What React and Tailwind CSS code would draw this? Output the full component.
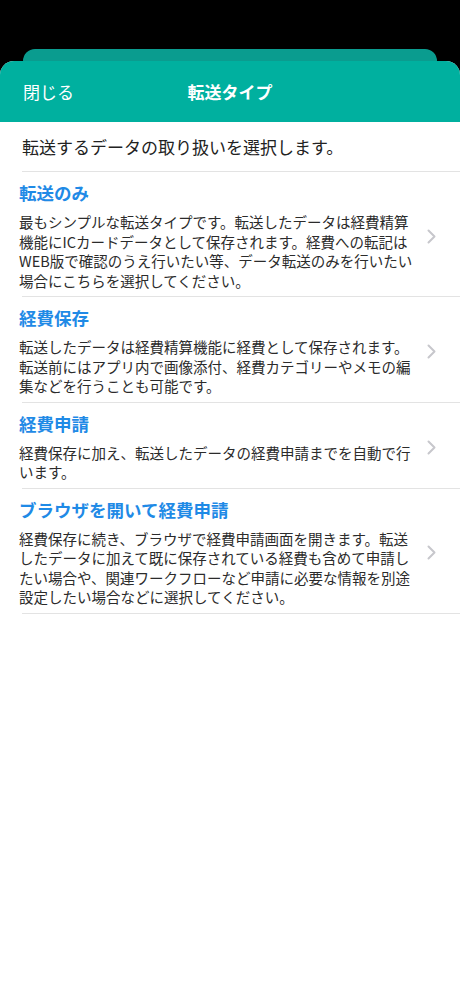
const items = [
  {
    title: '転送のみ',
    lines: [
      '最もシンプルな転送タイプです。転送したデータは経費精算',
      '機能にICカードデータとして保存されます。経費への転記は',
      'WEB版で確認のうえ行いたい等、データ転送のみを行いたい',
      '場合にこちらを選択してください。',
    ],
  },
  {
    title: '経費保存',
    lines: [
      '転送したデータは経費精算機能に経費として保存されます。',
      '転送前にはアプリ内で画像添付、経費カテゴリーやメモの編',
      '集などを行うことも可能です。',
    ],
  },
  {
    title: '経費申請',
    lines: [
      '経費保存に加え、転送したデータの経費申請までを自動で行',
      'います。',
    ],
  },
  {
    title: 'ブラウザを開いて経費申請',
    lines: [
      '経費保存に続き、ブラウザで経費申請画面を開きます。転送',
      'したデータに加えて既に保存されている経費も含めて申請し',
      'たい場合や、関連ワークフローなど申請に必要な情報を別途',
      '設定したい場合などに選択してください。',
    ],
  },
];

function Chevron() {
  return (
    <svg width="9" height="15" viewBox="0 0 9 15" fill="none">
      <path d="M1.5 1.5 L7.5 7.5 L1.5 13.5" stroke="#c7c7cc" strokeWidth="2" strokeLinecap="round" strokeLinejoin="round" />
    </svg>
  );
}

function TypeRow({ title, lines }) {
  return (
    <div className="border-b border-[#e3e3e3] ml-[22px]">
      <div className="flex items-center -ml-[3px] pt-[10px] pb-[6px] pr-[24px]">
        <div className="flex-1">
          <div className="text-[17.5px] leading-[22px] font-bold text-[#1f8ae6]">{title}</div>
          <div className="mt-[8px] text-[14.5px] leading-[19.5px] text-[#2b2b2b]">
            {lines.map((line) => (
              <div key={line} className="whitespace-nowrap">{line}</div>
            ))}
          </div>
        </div>
        <Chevron />
      </div>
    </div>
  );
}

export default function App() {
  return (
    <div
      className="min-h-[996px] bg-black flex flex-col"
      style={{ fontFamily: '"Noto Sans CJK JP", "Noto Sans", sans-serif' }}
    >
      <div className="h-[49px]" />
      {/* stacked sheet behind */}
      <div className="mx-[23px] h-[12px] rounded-t-[12px] bg-[#0a9c8f]" />
      <div className="flex-1 flex flex-col bg-white rounded-t-[14px] overflow-hidden">
        {/* Header */}
        <div className="h-[61px] bg-[#00b09f] flex items-center relative px-[23px]">
          <span className="text-[17px] text-white">閉じる</span>
          <span className="absolute left-0 right-0 text-center text-[17px] font-bold text-white pointer-events-none">
            転送タイプ
          </span>
        </div>

        {/* Intro */}
        <div className="border-b border-[#e3e3e3] ml-[22px] h-[50px] flex items-center">
          <span className="text-[17px] text-[#222]">転送するデータの取り扱いを選択します。</span>
        </div>

        {items.map((item) => (
          <TypeRow key={item.title} title={item.title} lines={item.lines} />
        ))}
      </div>
    </div>
  );
}
